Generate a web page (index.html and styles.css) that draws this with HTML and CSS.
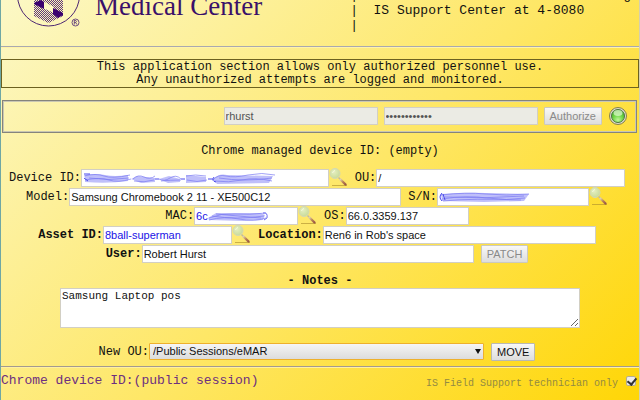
FILE: index.html
```html
<!DOCTYPE html>
<html lang="en">
<head>
<meta charset="utf-8">
<title>Chrome device management</title>
<link rel="stylesheet" href="styles.css">
</head>
<body>
<svg class="defs" aria-hidden="true">
  <defs>
    <linearGradient id="handle" x1="0" y1="0" x2="1" y2="1">
      <stop offset="0" stop-color="#e0cfa8"/><stop offset=".5" stop-color="#b98258"/><stop offset="1" stop-color="#9c5a44"/>
    </linearGradient>
    <radialGradient id="lens" cx=".4" cy=".35" r=".7">
      <stop offset="0" stop-color="#e6efc0"/><stop offset="1" stop-color="#c6da98"/>
    </radialGradient>
    <radialGradient id="led" cx=".5" cy=".8" r=".8">
      <stop offset="0" stop-color="#c0f79a"/><stop offset=".5" stop-color="#6ed645"/><stop offset="1" stop-color="#3fa32c"/>
    </radialGradient>
    <pattern id="weave" width="2" height="2" patternUnits="userSpaceOnUse">
      <path fill="#3a0a6c" fill-opacity=".8" d="M0 0h1v1H0zM1 1h1v1H1z"/>
    </pattern>
    <symbol id="search" viewBox="0 0 19 19">
      <path d="M3 17.500h15" stroke="#a88b2c" stroke-opacity=".6"/>
      <path d="M9.500 9.500l2.500 2.500" stroke="#b9b8a0" stroke-width="1.500"/>
      <path d="M11.500 11.500l5 5" stroke="url(#handle)" stroke-width="2.400" stroke-linecap="round"/>
      <circle cx="6" cy="5.500" r="5" fill="url(#lens)" stroke="#d3d8b4" stroke-width="1"/>
      <path d="M3.500 5q.500-2 2.500-2.500" fill="none" stroke="#f6fae0"/>
    </symbol>
  </defs>
</svg>
<div class="page">
  <header class="header">
    <svg class="seal" viewBox="16 0 66 30" aria-hidden="true">
      <circle cx="48.500" cy="-4" r="31" fill="none" stroke="#4d2672" stroke-width="1"/>
      <path d="M34 -3L48.500 -10L63 -3V17L48.500 24L34 17z" fill="url(#weave)"/>
      <path d="M43 2l11 6v6l-11-5z" fill="#fdf8c4"/>
      <path d="M34 4l7-3l3 2v7l-10-5zM53 9l10 5v2l-5 3l-5-4z" fill="#3a006f"/>
      <circle cx="75.500" cy="23.500" r="3.500" fill="none" stroke="#4d2672" stroke-width=".8"/>
      <path d="M74.300 25.500v-4h1.500q1.200 1-.1 2h-1.200m1.200 0l1.200 2" fill="none" stroke="#4d2672" stroke-width=".8"/>
    </svg>
    <h1 class="brand">Medical Center</h1>
    <pre class="contact">|                                  g
|  IS Support Center at 4-8080
|</pre>
  </header>

  <p class="notice">This application section allows only authorized personnel use.<br>Any unauthorized attempts are logged and monitored.</p>

  <form class="login">
    <input class="field login-field" type="text" aria-label="User name" value="rhurst" disabled>
    <input class="field login-field" type="password" aria-label="Password" value="abcdefghijkl" disabled>
    <button class="button" type="button" disabled>Authorize</button>
    <svg class="led" viewBox="0 0 20 20" role="img" aria-label="Online">
      <circle cx="10" cy="10" r="8.500" fill="#dcdccf" stroke="#85804a" stroke-width="1"/>
      <circle cx="10" cy="10" r="6.500" fill="url(#led)" stroke="#4c7440"/>
      <ellipse cx="10" cy="7" rx="4.500" ry="3" fill="#e4fbd4" fill-opacity=".7"/>
    </svg>
  </form>

  <main class="device">
    <p class="status">Chrome managed device ID: (empty)</p>

    <div class="row">
      <label for="device">Device ID:</label>
      <span class="hidden-value w-device">
        <input class="field" id="device" type="text">
        <svg class="scribble" width="200" height="14" viewBox="0 0 200 14" aria-hidden="true">
          <path d="M4 4q10-2 20 0t23 0v6q-20 3-43 1zM50 8l6-3 18 2v4l-14 1zM78 8l10-3 11 3v3l-12 1zM105 4l20 2v5l-20 1zM132 8q6-6 14-4l46 1-4 7-52 1z" fill="#a9a9f8" fill-opacity=".75"/>
          <g fill="none" stroke="#7a7af2" stroke-opacity=".7">
            <path d="M3 5q12-3 20 0t26-1M4 9q15-3 24 0t22-1M8 7q20 3 40 0M52 8q5-5 11-2t11-1M53 10q10 2 20-1M78 8q5 3 11-1t11 1M80 10q9-1 20-1M105 5q9-2 20 0M106 9q10 3 20 0M132 9q5-6 13-4t22-1t27 0M133 10q15 2 28-1t30 1M138 7q25 4 53 0"/>
          </g>
          <path d="M3 3h6M3 7l4 3M74 8h4M100 8h4M127 8h5M133 6q-3 4 2 5" fill="none" stroke="#4a4aec"/>
        </svg>
      </span>
      <svg class="search"><use href="#search"/></svg>
      <label class="next" for="ou">OU:</label>
      <input class="field w-ou" id="ou" type="text" value="/">
    </div>

    <div class="row">
      <label for="model">Model:</label>
      <input class="field w-user" id="model" type="text" value="Samsung Chromebook 2 11 - XE500C12">
      <label class="next" for="serial">S/N:</label>
      <span class="hidden-value w-serial">
        <input class="field" id="serial" type="text">
        <svg class="scribble" width="96" height="14" viewBox="0 0 96 14" aria-hidden="true">
          <path d="M4 4q25-2 45-1l43 1-5 7-40 1-42-1z" fill="#a9a9f8" fill-opacity=".75"/>
          <g fill="none" stroke="#7a7af2" stroke-opacity=".7">
            <path d="M4 5q25-3 45-1t43 0M5 9q25-4 45-1t38 0M8 7q40 2 79-1M6 11q30-3 78-1"/>
          </g>
          <path d="M5 3q-4 4 0 8M6 4l2 6" fill="none" stroke="#4a4aec"/>
        </svg>
      </span>
      <svg class="search"><use href="#search"/></svg>
    </div>

    <div class="row">
      <label for="mac">MAC:</label>
      <span class="hidden-value w-mac">
        <input class="field link-value" id="mac" type="text" value="6c">
        <svg class="scribble after-text" width="62" height="14" viewBox="0 0 62 14" aria-hidden="true">
          <path d="M0 9l8-5 44 0 5 2-2 5-20 1-34-1z" fill="#a9a9f8" fill-opacity=".75"/>
          <g fill="none" stroke="#7a7af2" stroke-opacity=".7">
            <path d="M1 9q12-5 26-4t31-1M1 11q15-4 30-1t27-1M4 7q25 4 52 0M8 5l45 4"/>
          </g>
          <path d="M55 4q5-1 4 5l-3 2" fill="none" stroke="#6a6af0"/>
        </svg>
      </span>
      <svg class="search"><use href="#search"/></svg>
      <label class="next" for="os">OS:</label>
      <input class="field w-os" id="os" type="text" value="66.0.3359.137">
    </div>

    <div class="row strong">
      <label for="asset">Asset ID:</label>
      <input class="field link-value w-asset" id="asset" type="text" value="8ball-superman">
      <svg class="search"><use href="#search"/></svg>
      <label class="next" for="location">Location:</label>
      <input class="field w-location" id="location" type="text" value="Ren6 in Rob's space">
    </div>

    <div class="row strong">
      <label for="user">User:</label>
      <input class="field w-user" id="user" type="text" value="Robert Hurst">
      <button class="button next" type="button" disabled>PATCH</button>
    </div>

    <label class="notes-title" for="notes">- Notes -</label>
    <textarea class="notes" id="notes">Samsung Laptop pos</textarea>

    <div class="row move">
      <label for="new-ou">New OU:</label>
      <span class="select-box">
        <select class="select" id="new-ou"><option>/Public Sessions/eMAR</option></select>
      </span>
      <button class="button next" type="button">MOVE</button>
    </div>
  </main>

  <footer class="footer">
    <span class="session">Chrome device ID:(public session)</span>
    <label class="technician" for="tech">IS Field Support technician only</label>
    <input class="check" id="tech" type="checkbox" checked>
  </footer>
</div>
</body>
</html>
```
FILE: styles.css
```css
* {
  box-sizing: border-box;
}

body {
  margin: 0;
  min-height: 100vh;
  padding: 0 1px;
  background: linear-gradient(90deg, #6fa7a4 50%, #d5cfae 50%);
  font: 12px/14px "Liberation Mono", monospace;
  color: #111;
}

.page {
  min-height: 100vh;
  overflow: hidden;
  background: linear-gradient(135deg, #fcf8c6, #fee767 52%, #ffd606);
}

.defs {
  position: absolute;
  width: 0;
  height: 0;
}

.header {
  display: flex;
  align-items: flex-end;
  height: 47px;
  padding: 0 8px 13px 15px;
  border-bottom: 1px solid #a9a9b0;
  box-shadow: 0 1px #fff3a8;
}

.seal {
  flex: none;
  width: 66px;
  height: 30px;
  margin-bottom: 4px;
}

.brand {
  margin: 0 0 20px 13px;
  font: 27px/14px "Liberation Serif", serif;
  color: #3a1069;
  white-space: nowrap;
}

.contact {
  margin: 0 0 0 auto;
  font: 13px/15px "Liberation Mono", monospace;
}

.notice {
  margin: 12px 0;
  padding: 1px 0 0;
  border: 1px solid #6c6120;
  font-size: 12px;
  line-height: 13px;
  text-align: center;
}

.login {
  display: flex;
  align-items: center;
  justify-content: flex-end;
  gap: 6px;
  margin: 0 2px 0 1px;
  height: 33px;
  padding: 0 8px 2px;
  border: 1px solid #85847c;
  box-shadow: inset 0 0 0 1px #c9c7b4;
}

.field {
  width: 100%;
  height: 18px;
  margin: 0;
  padding: 0 1px;
  border: 1px solid #d2cfc4;
  border-radius: 0;
  background: #fff;
  font: 11px/16px "Liberation Sans", sans-serif;
  color: #111;
}

.field:disabled {
  background: #ebebe4;
  color: #545454;
}

.login-field {
  width: 154px;
}

.link-value {
  color: #1a12e6;
}

.button {
  height: 18px;
  padding: 0 5px;
  border: 1px solid #b9b8b4;
  border-radius: 1px;
  background: linear-gradient(#f8f8f8, #dddddd);
  font: 11px/16px "Liberation Sans", sans-serif;
  color: #111;
}

.button:disabled {
  border-color: #cbc9c0;
  color: #8a8a8a;
}

.led {
  width: 20px;
  height: 20px;
}

.device {
  display: flex;
  flex-direction: column;
  align-items: center;
  padding: 11px 8px 5px;
}

.status {
  margin: 0 0 10px;
}

.row {
  display: flex;
  align-items: center;
  justify-content: center;
  height: 19px;
  width: 100%;
  padding-right: 6px;
  white-space: nowrap;
}

.strong,
.notes-title {
  font-weight: bold;
}

.next {
  margin-left: 7px;
}

.search {
  flex: none;
  width: 19px;
  height: 19px;
}

.hidden-value {
  position: relative;
  display: flex;
}

.scribble {
  position: absolute;
  left: 0;
  top: 2px;
}

.after-text {
  left: 14px;
}

.w-device {
  width: 248px;
}

.w-ou {
  width: 249px;
}

.w-user {
  width: 332px;
}

.w-serial {
  width: 152px;
}

.w-mac {
  width: 104px;
}

.w-os {
  width: 123px;
}

.w-asset {
  width: 129px;
}

.w-location {
  width: 273px;
}

.notes-title {
  margin-top: 11px;
}

.notes {
  width: 520px;
  max-width: 100%;
  height: 40px;
  padding: 0 1px;
  border: 1px solid #d2cfc4;
  background: #fff;
  font: 11px/14px "Liberation Mono", monospace;
  color: #111;
}

.move {
  margin-top: 14px;
}

.select-box {
  position: relative;
  display: flex;
}

.select-box::after {
  content: "";
  position: absolute;
  right: 3px;
  top: 6px;
  border: 3px solid transparent;
  border-top: 5px solid #111;
  border-bottom: 0;
  pointer-events: none;
}

.select {
  appearance: none;
  width: 335px;
  height: 17px;
  padding: 0 3px;
  border: 1px solid #eeb02c;
  border-radius: 1px;
  background: linear-gradient(#f5f5f5, #dcdcdc);
  font: 11px/15px "Liberation Sans", sans-serif;
  color: #111;
}

.footer {
  display: flex;
  align-items: flex-start;
  padding: 7px 3px 0 0;
  border-top: 1px solid #a39a90;
  box-shadow: inset 0 1px #fff0a0;
}

.session {
  font-size: 13px;
  color: #6d2f7f;
}

.technician {
  margin: 3px 8px 0 auto;
  font-size: 10px;
  color: #938a42;
}

.check {
  appearance: none;
  position: relative;
  width: 10px;
  height: 10px;
  margin: 2px 0 0;
  border: 1px solid #b4ad91;
  border-radius: 2px;
  background: #ececec;
}

.check:checked::after {
  content: "";
  position: absolute;
  left: 2px;
  top: -1px;
  width: 4px;
  height: 7px;
  border: solid #333;
  border-width: 0 2px 2px 0;
  transform: rotate(40deg);
}
```
